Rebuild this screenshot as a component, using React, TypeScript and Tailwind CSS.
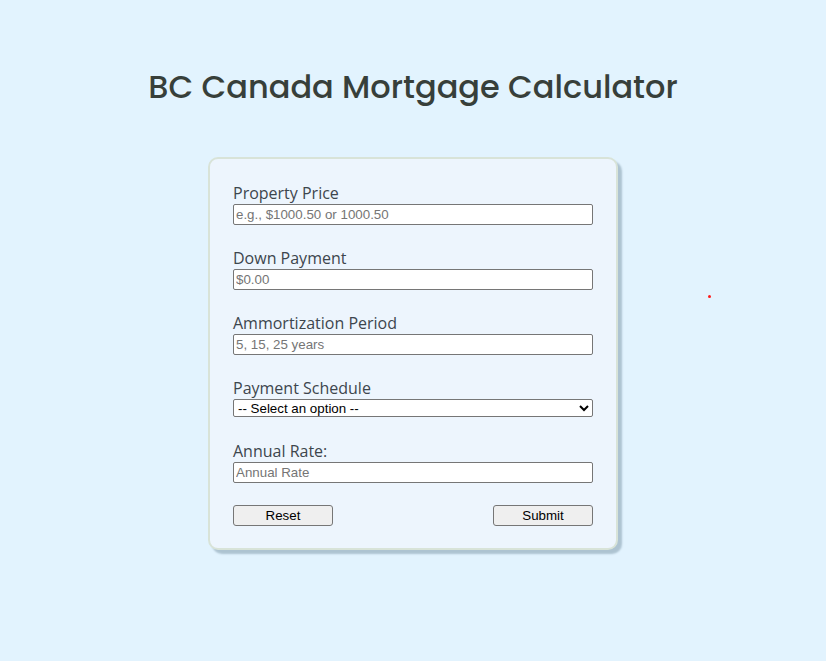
import React from 'react';

const fields = [
    {label: 'Property Price', placeholder: 'e.g., $1000.50 or 1000.50'},
    {label: 'Down Payment', placeholder: '$0.00'},
    {label: 'Ammortization Period', placeholder: '5, 15, 25 years'},
];

const inputClass =
    "block w-full h-[21px] bg-white border border-[#767676] rounded-[2px] px-[2px] text-[13.33px] font-['Liberation_Sans',Arial,sans-serif] text-black placeholder:text-[#757575] outline-none";

const labelClass = "block text-[16px] leading-[22px] text-[#3d464d] font-['Open_Sans',sans-serif]";

const buttonClass =
    "w-[100px] h-[21px] bg-[#efefef] border border-[#767676] rounded-[3px] text-[13.33px] leading-none text-black font-['Liberation_Sans',Arial,sans-serif]";

const App: React.FC = () => {
    return (
        <div className="relative min-h-[661px] bg-[#e2f3fe] flex flex-col items-center">
            <h1 className="mt-[64px] text-[32px] leading-[46px] font-medium text-[#373f3a] font-['Poppins','Open_Sans',sans-serif]">
                BC Canada Mortgage Calculator
            </h1>

            <form className="mt-[47px] w-[410px] bg-[#edf5fd] border-2 border-[#d8e3d8] rounded-[10px] shadow-[4px_4px_2px_#adc3d1] pt-[23px] px-[23px] pb-[22px]">
                {fields.map((f) => (
                    <div key={f.label} className="mb-[22px]">
                        <label className={labelClass}>{f.label}</label>
                        <input type="text" placeholder={f.placeholder} className={inputClass}/>
                    </div>
                ))}

                <div className="mb-[23px]">
                    <label className={labelClass}>Payment Schedule</label>
                    <select
                        defaultValue=""
                        className="block w-full h-[18px] bg-white border border-[#767676] rounded-[2px] text-[13.33px] leading-none text-black font-['Liberation_Sans',Arial,sans-serif] outline-none">
                        <option value="">-- Select an option --</option>
                        <option value="monthly">Monthly</option>
                        <option value="biweekly">Bi-weekly</option>
                        <option value="weekly">Weekly</option>
                    </select>
                </div>

                <div className="mb-[22px]">
                    <label className={labelClass}>Annual Rate:</label>
                    <input type="text" placeholder="Annual Rate" className={inputClass}/>
                </div>

                <div className="flex justify-between">
                    <button type="reset" className={buttonClass}>Reset</button>
                    <button type="submit" className={buttonClass}>Submit</button>
                </div>
            </form>

            {/* stray red dot */}
            <span className="absolute left-[708px] top-[295px] w-[3px] h-[3px] rounded-full bg-[#ff1a1a]"/>
        </div>
    );
};

export default App;
